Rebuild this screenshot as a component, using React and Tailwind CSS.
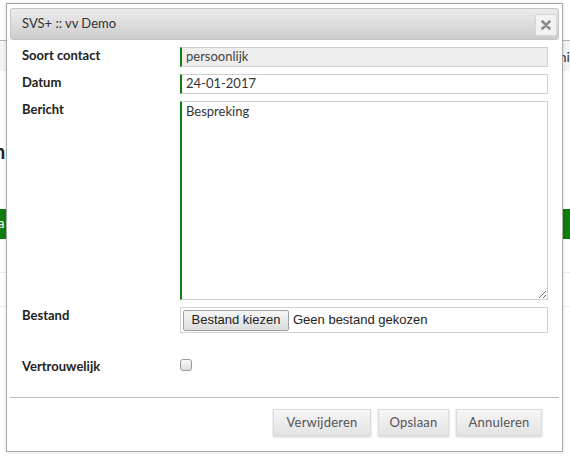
export default function App() {
  return (
    <div className="relative h-[459px] w-[570px] overflow-hidden bg-white font-['Lato',sans-serif] text-[13px] text-[#222]">
      {/* page behind the dialog */}
      <div className="h-[40px]" />
      <div className="flex h-[31px] items-center justify-end border-t border-[#b5b5b5] bg-[#f3f3f3]">
        <div className="flex w-[7px] justify-end overflow-hidden">
          <span className="shrink-0 whitespace-nowrap text-[14px] text-[#333]">hi</span>
        </div>
      </div>
      <div className="mt-[68px] flex h-[24px] items-center overflow-hidden">
        <span className="ml-[-6px] text-[20px] font-bold leading-none text-[#222]">n</span>
      </div>
      <div className="mt-[46px] flex h-[30px] items-center justify-between bg-[#0f7d0f] text-white">
        <span className="ml-[-2px]">a</span>
        <span />
      </div>
      <div className="mt-[33px] border-t border-[#ececec]" />
      <div className="mt-[33px] border-t border-[#ececec]" />

      {/* dialog */}
      <div className="absolute left-[6px] top-[3px] flex h-[449px] w-[557px] flex-col border border-[#a9a9a9] bg-white px-[3px] pt-[4px] shadow-[0_0_3px_rgba(0,0,0,0.15)]">
        <div className="flex h-[32px] items-center justify-between rounded-[3px] border border-[#c4c4c4] bg-gradient-to-b from-[#ececec] to-[#cdcdcd] pl-[11px] pr-[1px]">
          <span className="text-[13px] text-[#333]">SVS+ :: vv Demo</span>
          <div className="mt-[1px] flex h-[22px] w-[22px] items-center justify-center rounded-[2px] border border-[#d6d6d6] bg-[#f2f2f2]">
            <svg width="10" height="10" viewBox="0 0 10 10">
              <path d="M1.5 1.5 L8.5 8.5 M8.5 1.5 L1.5 8.5" stroke="#8a8a8a" strokeWidth="2.6" strokeLinecap="round" />
            </svg>
          </div>
        </div>

        <div className="flex flex-col pl-[12px] pr-[11px]">
          <div className="mt-[7px] flex">
            <div className="w-[158px] leading-[16px] font-bold">Soort contact</div>
            <div className="flex h-[20px] flex-1 items-center border border-l-2 border-[#cfcfcf] border-l-[#0f7d0f] bg-[#eeeeee] px-[4px] text-[#444]">
              persoonlijk
            </div>
          </div>
          <div className="mt-[7px] flex">
            <div className="w-[158px] leading-[16px] font-bold">Datum</div>
            <div className="flex h-[20px] flex-1 items-center border border-l-2 border-[#cfcfcf] border-l-[#0f7d0f] bg-white px-[4px] text-[#333]">
              24-01-2017
            </div>
          </div>
          <div className="mt-[7px] flex">
            <div className="w-[158px] leading-[16px] font-bold">Bericht</div>
            <textarea
              readOnly
              defaultValue="Bespreking"
              className="h-[199px] flex-1 resize border border-l-2 border-[#cfcfcf] border-l-[#0f7d0f] bg-white px-[4px] pt-0 font-['Lato',sans-serif] text-[13px] text-[#333] outline-none"
            />
          </div>
          <div className="mt-[7px] flex">
            <div className="w-[158px] leading-[16px] font-bold">Bestand</div>
            <div className="flex h-[26px] flex-1 items-center border border-[#d2d2d2] px-[2px] font-['Liberation_Sans',sans-serif] text-[13px] text-[#222]">
              <div className="flex h-[21px] w-[106px] items-center justify-center rounded-[2px] border border-[#a0a0a0] bg-gradient-to-b from-[#f6f6f6] to-[#dddddd]">
                Bestand kiezen
              </div>
              <span className="ml-[4px]">Geen bestand gekozen</span>
            </div>
          </div>
          <div className="mt-[25px] flex">
            <div className="w-[158px] leading-[16px] font-bold">Vertrouwelijk</div>
            <div className="mt-[1px] h-[12px] w-[12px] rounded-[3px] border border-[#9a9a9a] bg-gradient-to-b from-[#fbfbfb] to-[#dedede]" />
          </div>
        </div>

        <div className="mt-[23px] border-t border-[#bcbcbc]" />

        <div className="mt-[11px] flex justify-end gap-[7px] pr-[17px]">
          <button className="h-[27px] w-[98px] border border-[#dcdcdc] bg-gradient-to-b from-[#f6f6f6] to-[#e3e3e3] text-[13px] tracking-[0.2px] text-[#555] shadow-[0_1px_2px_rgba(0,0,0,0.2)]">
            Verwijderen
          </button>
          <button className="h-[27px] w-[71px] border border-[#dcdcdc] bg-gradient-to-b from-[#f6f6f6] to-[#e3e3e3] text-[13px] tracking-[0.2px] text-[#555] shadow-[0_1px_2px_rgba(0,0,0,0.2)]">
            Opslaan
          </button>
          <button className="h-[27px] w-[86px] border border-[#dcdcdc] bg-gradient-to-b from-[#f6f6f6] to-[#e3e3e3] text-[13px] tracking-[0.2px] text-[#555] shadow-[0_1px_2px_rgba(0,0,0,0.2)]">
            Annuleren
          </button>
        </div>
      </div>
    </div>
  );
}
